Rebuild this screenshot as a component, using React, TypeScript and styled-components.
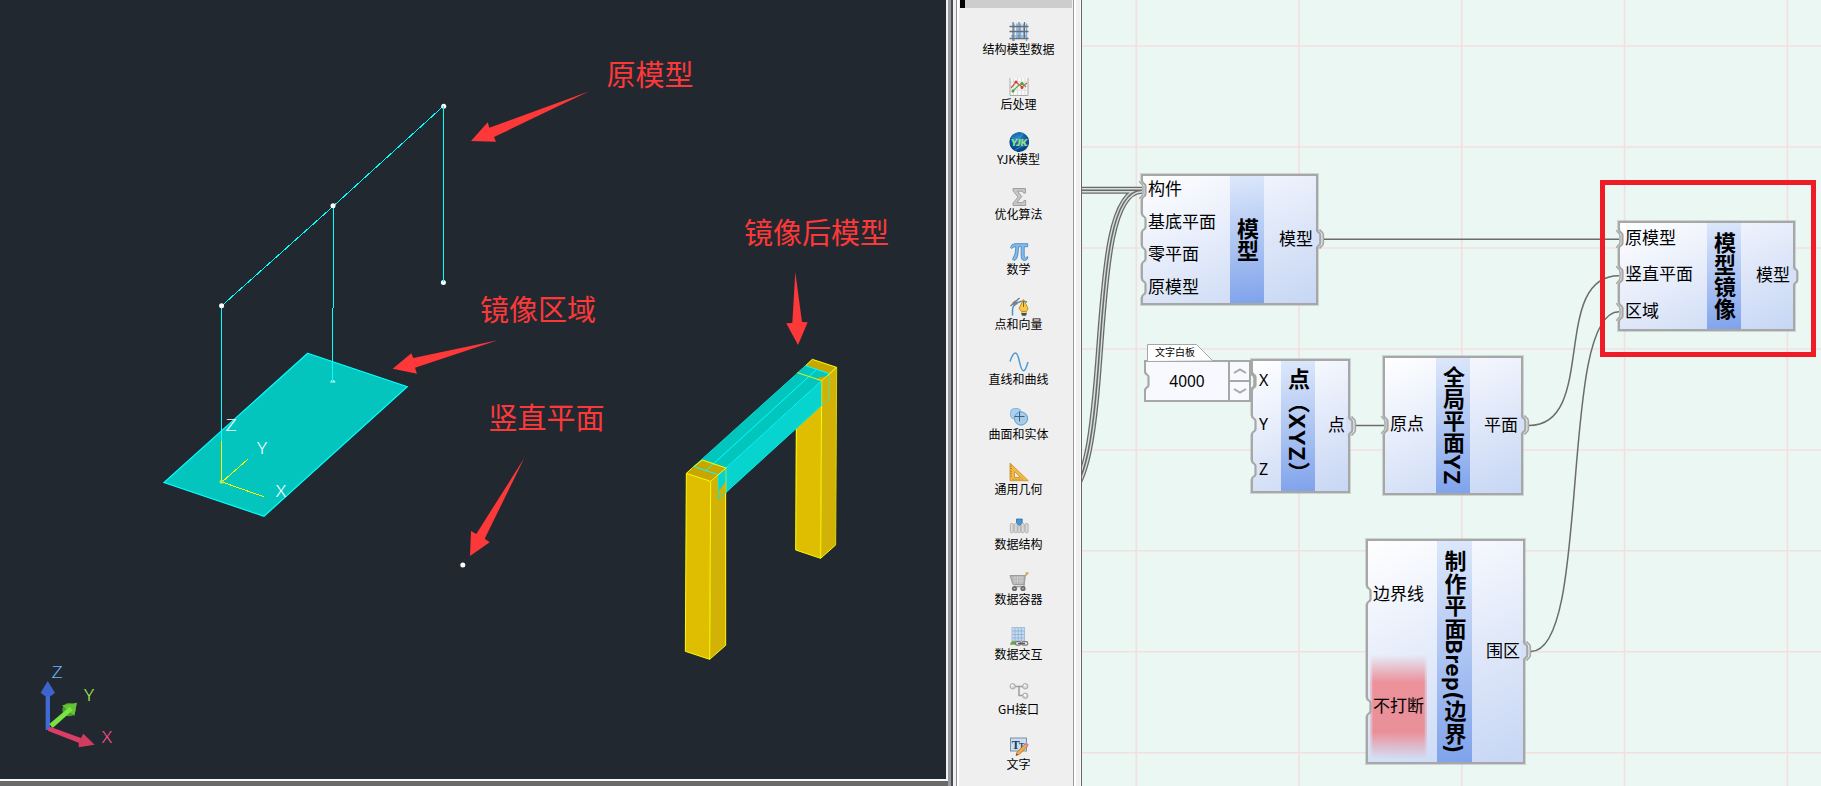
import React from "react";
import styled, { createGlobalStyle, css } from "styled-components";

const FONT = `"Noto Sans CJK SC", "Noto Sans", sans-serif`;
const EDGE = "#a7a7a7";
const CANVAS = "#ebf7f3";

const GlobalStyle = createGlobalStyle`
  html, body, #root { height: 100%; }
  body { margin: 0; overflow: hidden; font-family: ${FONT}; color: #000; }
  svg { display: block; }
`;

const Screen = styled.div`
  display: flex;
  width: 1821px;
  height: 786px;
  overflow: hidden;
  background: #efefef;
`;

/* ---------- CAD viewport ---------- */

const ViewportFrame = styled.section`
  display: flex;
  flex-direction: column;
  width: 948px;
  flex: none;
  background: #6a6a6a;
`;

const Viewport = styled.div`
  position: relative;
  height: 779px;
  box-sizing: border-box;
  background: #222830;
  border-right: 2px solid #f1f1f1;
  overflow: hidden;
`;

const ViewportRule = styled.div`
  height: 2px;
  background: #f8f8f8;
`;

const Callout = styled.span<{ $x: number; $y: number }>`
  position: absolute;
  left: ${(p) => p.$x}px;
  top: ${(p) => p.$y}px;
  transform: translateY(-50%);
  font-size: 29px;
  line-height: 32px;
  color: #fd3838;
  white-space: nowrap;
`;

const AxisLetter = styled.span<{ $x: number; $y: number; $color: string }>`
  position: absolute;
  left: ${(p) => p.$x}px;
  top: ${(p) => p.$y}px;
  width: 20px;
  margin-left: -10px;
  text-align: center;
  transform: translateY(-50%) scaleX(1.25);
  font-family: "Noto Sans CJK SC", sans-serif;
  font-weight: 300;
  font-size: 16px;
  line-height: 20px;
  color: ${(p) => p.$color};
`;

const ModelDrawing = () => (
  <svg width="946" height="779" viewBox="0 0 946 779" fill="none">
    <polygon points="307.7,353.3 407.3,386.7 264,516.3 164,482.5" fill="#04c5be" stroke="#00ffff" strokeWidth="1.2" />
    <g stroke="#00ffff" strokeWidth="1" shapeRendering="crispEdges">
      <path d="M443.5 106L333.5 206L221.5 306" />
      <path d="M443.5 106V283M333.5 206V308M332.5 308V382M221.5 306V441" />
    </g>
    <g stroke="#ffff00" strokeWidth="1" shapeRendering="crispEdges">
      <path d="M221.5 441V482M222 482L247.7 459.3M222 482L263.7 496.7" />
    </g>
    <g fill="#ffffff">
      <circle cx="443.7" cy="106.3" r="2.5" />
      <circle cx="333" cy="205.8" r="2.5" />
      <circle cx="221.6" cy="305.7" r="2.5" />
      <circle cx="443.4" cy="282.4" r="2.5" />
      <circle cx="462.8" cy="565" r="2.5" />
      <path d="M330.3 382.5a2.5 2.5 0 0 1 5 0z" fill="#c9f5f2" />
      <circle cx="221.5" cy="481.7" r="2" fill="#b9ec52" />
    </g>
    <path d="M332.5 376V382M443.5 278V282M443.5 106V111" stroke="#00ffff" shapeRendering="crispEdges" />

    <g transform="translate(660 200) scale(.33333)" strokeWidth="3" strokeLinejoin="round">
      <polygon points="412,518 457,478 530,502 485,542" fill="#c8a600" />
      <polygon points="408,640 485,542 482,1075 407,1050" fill="#dfbd00" />
      <polygon points="485,542 530,502 527,1035 482,1075" fill="#d2b207" />
      <path d="M437 497L457 478L530 502L485 542L482 1075L407 1050L409 685M482 1075L527 1035" stroke="#ffff00" />
      <path d="M530 502L527 1035" stroke="#d9d900" />

      <polygon points="101,800 437,497 508,521 485,542 198,804" fill="#02c5be" />
      <polygon points="198,804 485,542 485,616 198,878" fill="#08d4cf" />
      <polygon points="468,540 482,530 500,530 485,542" fill="#c8a600" />

      <polygon points="79,820 127,780 198,804 152,844" fill="#c8a600" />
      <polygon points="79,820 152,844 149,1378 76,1354" fill="#dfbd00" />
      <polygon points="152,844 198,804 197,1336 149,1378" fill="#d2b207" />
      <polygon points="175,824 198,804 198,843 178,872" fill="#08d4cf" />

      <path d="M101 800L437 497" stroke="#00ddd8" />
      <path d="M437 497L508 521M139 811L468 510M198 804L485 542M101 800L175 824" stroke="#00ffff" />
      <path d="M175 824V896L198 877L485 616" stroke="#00e8e0" />
      <path d="M508 521V598L485 616" stroke="#5adc91" />
      <path d="M198 804V878M485 542V616" stroke="#a8e14c" />
      <path d="M412 518L485 542L530 502" stroke="#e4f512" />
      <path d="M101 800L127 780L198 804L152 844L149 1378L76 1354L79 820L101 800M79 820L152 844M149 1378L197 1336V878" stroke="#ffff00" />
    </g>

    <g fill="#fd3838">
      <polygon points="589.3,91.3 489.3,127.8 487.7,122.3 471,140.9 496,141.7 494,137.1" />
      <polygon points="497.7,340.3 413.3,358 411.3,353.3 392.7,368.7 417,373.7 415,367.7" />
      <polygon points="524.3,458.1 476.3,533.9 471,531.1 470,555.9 489.7,542.2 484.7,538.7" />
      <polygon points="795.3,272 792.3,323 786.3,323.3 798,345 807.7,322.3 802,322" />
    </g>

    <g transform="translate(0 640) scale(.33333)">
      <polygon points="137,160 150,160 150,262 142,270 137,270" fill="#3f6bd6" />
      <path d="M143 123L165 158Q144 180 122 158Z" fill="#3f63cc" />
      <circle cx="207" cy="209" r="20" fill="#4b9c2d" />
      <polygon points="186,196 231,188 223,228" fill="#62c433" />
      <polygon points="148,252 209,200 219,210 158,264" fill="#79e342" />
      <polygon points="142,266 152,261 243,294 238,309 145,273" fill="#d93e66" />
      <polygon points="250,281 284,314 236,322 236,306" fill="#cf3c60" />
    </g>
  </svg>
);

/* ---------- Splitters ---------- */

const Splitter = styled.div`
  width: 11px;
  flex: none;
  background: linear-gradient(
    to right,
    #9a9aa3 0 3px, #4c4c50 3px 5px, #f0f0f0 5px 8px, #8f8f8f 8px 9px, #ffffff 9px 11px
  );
`;

const RightSplitter = styled.div`
  width: 9px;
  flex: none;
  background: linear-gradient(
    to right,
    #9b9b9b 0 1px, #ffffff 1px 3px, #f0f0f0 3px 7px, #fafafa 7px 8px, #666666 8px 9px
  );
`;

/* ---------- Tool palette ---------- */

const Palette = styled.aside`
  display: flex;
  flex-direction: column;
  width: 114px;
  flex: none;
  background: #efefef;
`;

const PaletteBar = styled.div`
  height: 8px;
  flex: none;
  margin: 0 1px 0 1px;
  background: #cdcdcd;
  border-left: 5px solid #000;
  box-sizing: border-box;
`;

const PaletteItems = styled.div`
  display: flex;
  flex-direction: column;
  padding: 14px 0 0 5px;
`;

const PaletteItem = styled.div`
  display: flex;
  flex-direction: column;
  align-items: center;
  height: 55px;
  flex: none;
`;

const PaletteLabel = styled.span`
  margin-top: -1px;
  font-size: 12px;
  line-height: 16px;
  white-space: nowrap;
`;

const icons: Record<string, React.ReactNode> = {
  grid: (
    <g fill="none">
      <path d="M5 1.500V19M8 1.500V17M11.500 1.500V17M14.500 1.500V17M17.500 1.500V19M2 14H18" stroke="#7eb0df" strokeWidth="1.500" />
      <path d="M.5 4.500H19.500M.5 9.500H19.500M.5 16.500H19.500" stroke="#6d6d6d" strokeWidth="1.300" />
      <path d="M4 0V19M10 0V17M15.500 0V17" stroke="#5d6f84" strokeWidth="1.100" />
    </g>
  ),
  chart: (
    <g fill="none">
      <rect x="1" y="1" width="18" height="18" fill="#f8f8f8" />
      <path d="M4.500 1V18M8.500 1V18M12.500 1V18M16 1V18M1 5H18M1 9H18M1 13H18" stroke="#dddddd" />
      <path d="M1 1V18.500H19V1" stroke="#aaaaaa" />
      <path d="M2 11L7 5L13 10L18 6" stroke="#d85048" strokeWidth="1.200" />
      <path d="M3 15L9 9L13 6L17 10" stroke="#5aa64e" strokeWidth="1.200" />
      <circle cx="7" cy="5" r="1.500" fill="#d83a32" /><circle cx="13" cy="10.500" r="1.500" fill="#d83a32" />
      <circle cx="4" cy="14" r="1.500" fill="#4aa23c" /><circle cx="13" cy="6.500" r="1.500" fill="#4aa23c" />
    </g>
  ),
  yjk: (
    <g>
      <defs>
        <radialGradient id="globe" cx=".45" cy=".3" r=".75">
          <stop offset="0" stopColor="#318bc8" /><stop offset=".6" stopColor="#07549c" /><stop offset="1" stopColor="#043a78" />
        </radialGradient>
      </defs>
      <circle cx="10.200" cy="10" r="9.900" fill="url(#globe)" />
      <path d="M3 5Q10 10 14 1M6 18Q12 13 19 13" stroke="#4aa0d4" strokeWidth=".8" fill="none" />
      <text x="10.100" y="13.500" fontFamily="Lato, sans-serif" fontWeight="900" fontStyle="italic" fontSize="10" fill="#8be06a" stroke="#d9f5c0" strokeWidth=".2" textAnchor="middle">YJK</text>
    </g>
  ),
  sigma: (
    <path d="M4 1.500H16.500V6H14.500L13.500 4.200H8.500L12.800 9.600L8 15.600H13.700L15 13.500H16.700V18.500H4V16.200L9 10L4 3.800Z" fill="#c6c6c6" stroke="#999999" strokeWidth=".9" />
  ),
  pi: (
    <path d="M1.500 5.500Q2.500 1.700 6 1.700H18.700V4.700H15.200V13.500Q15.200 16 16.600 16Q17.600 16 18 14.600L19 15Q18.500 18.500 15.500 18.500Q12.200 18.500 12.200 14.500V4.700H9.500Q9.400 13 7.700 16.500Q6.500 18.700 4.600 18.300Q2.500 17.500 4.500 15.300Q6.800 12 6.900 4.700Q4 4.700 2.500 6.500Z" fill="#84bbea" stroke="#4a88c3" strokeWidth=".9" />
  ),
  pen: (
    <g fill="none">
      <path d="M3.500 18.500V13Q3.700 7 10 5Q14 3.500 18 5" stroke="#4a94cd" strokeWidth="1.500" />
      <path d="M1.500 9L10.500 1" stroke="#777777" strokeWidth="1.300" />
      <rect x="3.800" y="4" width="4.200" height="4.200" fill="#808080" transform="rotate(-40 6 6)" />
      <path d="M14.500 2.500L19 11.500L17.500 14.500H12.500L10 11.500Z" fill="#f8c944" stroke="#bd8425" strokeWidth=".9" />
      <path d="M14.500 4V10" stroke="#8c631b" />
      <path d="M12 15.500H18L17 18.700H13Z" fill="#4c4c4c" />
      <path d="M12.500 15.500H17.500" stroke="#f4d872" />
    </g>
  ),
  wave: (
    <path d="M1 9.500C3.500 2 5 1 6.500 1C10.500 1 10.500 18.700 14.500 18.700C16.300 18.700 17.500 15.500 19 10" fill="none" stroke="#4d9bd0" strokeWidth="1.500" />
  ),
  solid: (
    <g>
      <rect x="1.500" y="1.500" width="10.500" height="10.500" rx="4" fill="#a9d0f1" stroke="#86b4de" />
      <circle cx="12" cy="11.500" r="6.600" fill="#a5cbed" stroke="#5d9bd0" />
      <path d="M10.500 4.500V14.500M5.500 9.500H15.500" stroke="#4f5d6d" />
    </g>
  ),
  ruler: (
    <g>
      <path d="M1 1L19.300 18.700H1Z" fill="#f2b84a" stroke="#c98b25" strokeWidth=".8" />
      <path d="M5.500 9.500L11.500 15.300H5.500Z" fill="#efefef" stroke="#c98b25" strokeWidth=".8" />
      <path d="M1 4H3M1 6.500H3M1 9H3M1 11.500H3M1 14H3M4 18V16.500M7 18V16.500M10 18V16.500M13 18V16.500" stroke="#b57a1b" strokeWidth=".8" />
    </g>
  ),
  list: (
    <g fill="#d8d8d8" stroke="#a9a9a9" strokeWidth=".8">
      <rect x="1.300" y="6.500" width="3" height="9.200" rx="1" />
      <rect x="5.300" y="6.500" width="3" height="9.200" rx="1" />
      <rect x="9" y="6.500" width="2.600" height="9.200" rx="1" />
      <rect x="12.300" y="6.500" width="3" height="9.200" rx="1" />
      <rect x="16.200" y="6.500" width="3" height="9.200" rx="1" />
      <path d="M7.500 2H13.200V5.500L10.300 8.500L7.500 5.500Z" fill="#4597dc" stroke="#2e6ba8" />
    </g>
  ),
  cart: (
    <g fill="none">
      <path d="M1 3.500H16L15 12.500H4Z" fill="#b4b4b4" stroke="#9d9d9d" />
      <path d="M3 6H15M4.500 9H15M6 4V12M8.500 4V12M11 4V12M13 4V12" stroke="#d6d6d6" strokeWidth=".6" />
      <path d="M18 2L16 4L15 14.500H5" stroke="#a0a0a0" strokeWidth="1.300" />
      <circle cx="5.500" cy="16.500" r="2.600" fill="#6c6c6c" /><circle cx="14" cy="16.500" r="2.600" fill="#6c6c6c" />
      <circle cx="5.500" cy="16.500" r=".8" fill="#c5c5c5" /><circle cx="14" cy="16.500" r=".8" fill="#c5c5c5" />
      <rect x="16.500" y=".3" width="3" height="2" fill="#e9a43a" />
    </g>
  ),
  exchange: (
    <g fill="none">
      <rect x="3" y=".5" width="12.500" height="13.500" fill="#c6dcf2" stroke="#9fb6cf" strokeWidth=".8" />
      <path d="M6 1V14M9.200 1V14M12.400 1V14M3 4H15.500M3 7.500H15.500M3 11H15.500" stroke="#8eafd4" strokeWidth=".8" />
      <path d="M1 17.800Q2 12.500 7 14.500V17.800Z" fill="#6da343" />
      <rect x="6.500" y="14.700" width="5.500" height="3.500" rx="1.700" stroke="#777777" strokeWidth="1.200" />
      <rect x="12.800" y="14.700" width="6" height="3.500" rx="1.700" stroke="#777777" strokeWidth="1.200" />
      <path d="M9 16.500H16" stroke="#555555" strokeWidth="1.200" />
    </g>
  ),
  tree: (
    <g fill="none">
      <path d="M4 4.500H16M10 4.500V13.500H15" stroke="#9d9d9d" strokeWidth="1.500" />
      <g fill="#d6d6d6" stroke="#a3a3a3" strokeWidth=".9">
        <circle cx="3.700" cy="4.300" r="2.700" /><circle cx="16.300" cy="4.300" r="2.700" /><circle cx="16.300" cy="13.800" r="2.700" />
      </g>
      <circle cx="3.200" cy="3.500" r="1.100" fill="#fff" /><circle cx="15.800" cy="3.500" r="1.100" fill="#fff" /><circle cx="15.800" cy="13" r="1.100" fill="#fff" />
    </g>
  ),
  text: (
    <g>
      <rect x="1.500" y="1" width="16" height="13" fill="#c9dff3" stroke="#7f90a2" />
      <text x="2.800" y="11.800" fontFamily="Liberation Serif, serif" fontWeight="700" fontSize="12" fill="#223c63">T</text>
      <text x="10" y="11.800" fontFamily="Liberation Serif, serif" fontWeight="700" fontSize="8" fill="#223c63">T</text>
      <path d="M7 18.500L8 15.300L16.500 6.500L19 8.800L10.300 17.500Z" fill="#f3a94a" stroke="#b06a1d" strokeWidth=".7" />
      <path d="M15.700 7.300L17.600 5.400L19.800 7.800L18 9.700Z" fill="#cf82c3" />
      <path d="M7 18.500L7.600 16.500L9 17.800Z" fill="#444444" />
    </g>
  ),
};

const tools: [string, string][] = [
  ["grid", "结构模型数据"],
  ["chart", "后处理"],
  ["yjk", "YJK模型"],
  ["sigma", "优化算法"],
  ["pi", "数学"],
  ["pen", "点和向量"],
  ["wave", "直线和曲线"],
  ["solid", "曲面和实体"],
  ["ruler", "通用几何"],
  ["list", "数据结构"],
  ["cart", "数据容器"],
  ["exchange", "数据交互"],
  ["tree", "GH接口"],
  ["text", "文字"],
];

/* ---------- Node canvas ---------- */

const Canvas = styled.main`
  position: relative;
  flex: 1;
  background: ${CANVAS};
  overflow: hidden;
`;

const ORIGIN = 1082;

const CanvasLayer = styled.svg`
  position: absolute;
  inset: 0;
`;

const NodeBox = styled.div<{ $x: number; $y: number; $w: number; $h: number; $cols: string }>`
  position: absolute;
  left: ${(p) => p.$x - ORIGIN}px;
  top: ${(p) => p.$y}px;
  width: ${(p) => p.$w}px;
  height: ${(p) => p.$h}px;
  box-sizing: border-box;
  border: 2px solid ${EDGE};
  box-shadow: 0 0 0 1px rgba(150, 150, 150, 0.35);
  display: grid;
  grid-template-columns: ${(p) => p.$cols};
  background: linear-gradient(155deg, #ffffff 0%, #e4ebfa 48%, #c6d6f4 100%);
`;

const PortColumn = styled.div`
  display: flex;
  flex-direction: column;
  min-width: 0;
  margin: -2px 0 -1px;
`;

const PortRow = styled.div<{ $side: "in" | "out" }>`
  position: relative;
  flex: 1;
  display: flex;
  align-items: center;
  justify-content: ${(p) => (p.$side === "in" ? "flex-start" : "flex-end")};
  padding: ${(p) => (p.$side === "in" ? "0 0 4px 5px" : "0 3px 3px 0")};
`;

const PortLabel = styled.span<{ $latin?: boolean }>`
  position: relative;
  font-size: ${(p) => (p.$latin ? 16 : 17)}px;
  line-height: 20px;
  white-space: nowrap;
  ${(p) => p.$latin && css`
    top: 1px;
    left: 1px;
    font-family: "Noto Sans", sans-serif;
  `}
`;

const AlertGlow = styled.div`
  position: absolute;
  left: 2px;
  width: 57px;
  top: 4px;
  bottom: 4px;
  background: linear-gradient(to bottom, rgba(235, 137, 147, 0), #eb929b 26%, #e98f98 74%, rgba(235, 137, 147, 0));
  mask-image: linear-gradient(
    to right,
    rgba(0, 0, 0, 0.4) 0 1px, #000 3px calc(100% - 3px), rgba(0, 0, 0, 0.4) calc(100% - 1px)
  );
`;

const TitleBand = styled.div`
  display: flex;
  align-items: center;
  justify-content: center;
  padding-right: 3px;
  background: linear-gradient(172deg, #dde8fb 0%, #b4caf4 45%, #7fa2eb 100%);
`;

const Title = styled.span<{ $spacing?: number }>`
  writing-mode: vertical-rl;
  font-family: Inter, "Noto Sans CJK SC", sans-serif;
  font-size: 22px;
  line-height: 31px;
  font-weight: 700;
  letter-spacing: ${(p) => p.$spacing ?? 0}px;
  white-space: nowrap;
`;

const PortMark = styled.svg<{ $side: "in" | "out" }>`
  position: absolute;
  top: 50%;
  margin-top: -12px;
  ${(p) => (p.$side === "in" ? "left: -8px;" : "right: -10px;")}
`;

const InPort = ({ linked }: { linked?: boolean }) => (
  <PortMark $side="in" width="14" height="24" viewBox="0 0 14 24" fill="none">
    <path d="M5 2.500H8V3L10.500 6V18L8 21V21.500H5Z" fill={CANVAS} />
    <path d="M7 1.500V3Q7.300 4.600 9 5.600Q10.500 6.400 10.500 8V16Q10.500 17.600 9 18.400Q7.300 19.400 7 21V22.500" stroke={EDGE} strokeWidth="2.200" />
    {linked && <path d="M4.500 3Q5 4.800 6.500 6Q8 7.200 8 9V15Q8 16.800 6.500 18Q5 19.200 4.500 21" stroke={EDGE} strokeWidth="1.500" />}
  </PortMark>
);

const OutPort = ({ linked }: { linked?: boolean }) => (
  <PortMark $side="out" width="14" height="24" viewBox="0 0 14 24" fill="none">
    <path d="M2 2.500H5L8.500 6V18L5 21.500H2Z" fill="#d6e1f7" />
    <path d="M5 1.500V3Q5.300 4.600 7 5.600Q8.300 6.400 8.300 8V16Q8.300 17.600 7 18.400Q5.300 19.400 5 21V22.500" stroke={EDGE} strokeWidth="2.200" />
    {linked && <path d="M7.500 2.500Q8.300 3.700 9.500 4.600Q11.300 6 11.300 8V16Q11.300 18 9.500 19.400Q8.300 20.300 7.500 21.500" stroke={EDGE} strokeWidth="1.700" />}
  </PortMark>
);

type Port = { label: string; linked?: boolean; latin?: boolean; alert?: boolean };
type NodeProps = {
  x: number; y: number; w: number; h: number; cols: string;
  title: string; spacing?: number; inputs: Port[]; output: Port;
};

const GraphNode = ({ x, y, w, h, cols, title, spacing, inputs, output }: NodeProps) => (
  <NodeBox $x={x} $y={y} $w={w} $h={h} $cols={cols}>
    <PortColumn>
      {inputs.map((p) => (
        <PortRow key={p.label} $side="in">
          {p.alert && <AlertGlow />}
          <InPort linked={p.linked} />
          <PortLabel $latin={p.latin}>{p.label}</PortLabel>
        </PortRow>
      ))}
    </PortColumn>
    <TitleBand><Title $spacing={spacing}>{title}</Title></TitleBand>
    <PortColumn>
      <PortRow $side="out">
        <OutPort linked={output.linked} />
        <PortLabel>{output.label}</PortLabel>
      </PortRow>
    </PortColumn>
  </NodeBox>
);

const nodes: NodeProps[] = [
  {
    x: 1141, y: 174, w: 177, h: 131, cols: "87px 34px 1fr", title: "模型",
    inputs: [{ label: "构件", linked: true }, { label: "基底平面" }, { label: "零平面" }, { label: "原模型" }],
    output: { label: "模型", linked: true },
  },
  {
    x: 1618, y: 221, w: 177, h: 110, cols: "87px 34px 1fr", title: "模型镜像",
    inputs: [{ label: "原模型", linked: true }, { label: "竖直平面", linked: true }, { label: "区域", linked: true }],
    output: { label: "模型" },
  },
  {
    x: 1251, y: 359, w: 99, h: 134, cols: "28px 34px 1fr", title: "点（XYZ）", spacing: 0.5,
    inputs: [{ label: "X", latin: true }, { label: "Y", latin: true }, { label: "Z", latin: true }],
    output: { label: "点", linked: true },
  },
  {
    x: 1383, y: 356, w: 140, h: 139, cols: "51px 34px 1fr", title: "全局平面YZ",
    inputs: [{ label: "原点", linked: true }],
    output: { label: "平面", linked: true },
  },
  {
    x: 1366, y: 539, w: 159, h: 225, cols: "69px 35px 1fr", title: "制作平面Brep(边界)", spacing: 0.4,
    inputs: [{ label: "边界线" }, { label: "不打断", alert: true }],
    output: { label: "围区", linked: true },
  },
];

const NumberPanel = styled.div`
  position: absolute;
  left: ${1144 - ORIGIN}px;
  top: 344px;
  width: 107px;
  display: flex;
  flex-direction: column;
`;

const NumberTab = styled.div`
  position: relative;
  height: 16px;
  margin-left: 3px;
  padding-left: 8px;
  font-size: 10px;
  line-height: 15px;
`;

const TabShape = styled.svg`
  position: absolute;
  left: 0;
  top: 0;
`;

const TabText = styled.span`
  position: relative;
`;

const NumberBody = styled.div`
  display: flex;
  height: 42px;
  box-sizing: border-box;
  border: 2px solid ${EDGE};
  background: #f8f9fe;
`;

const NumberValue = styled.div`
  position: relative;
  flex: 1;
  display: flex;
  align-items: center;
  justify-content: center;
  padding: 0 0 1px 0;
  font: 15.500px/20px "Noto Sans", sans-serif;
`;

const Stepper = styled.div`
  display: flex;
  flex-direction: column;
  width: 19px;
  border-left: 2px solid ${EDGE};
`;

const Step = styled.div`
  display: flex;
  flex: 1;
  align-items: center;
  justify-content: center;
  & + & { border-top: 2px solid ${EDGE}; }
`;

const Chevron = ({ down }: { down?: boolean }) => (
  <svg width="14" height="6" viewBox="0 0 14 6" fill="none">
    <path d={down ? "M1 1L7 4.500L13 1" : "M1 5L7 1.500L13 5"} stroke={EDGE} strokeWidth="2" />
  </svg>
);

const HighlightBox = styled.div`
  position: absolute;
  left: ${1600 - ORIGIN}px;
  top: 180px;
  width: 216px;
  height: 177px;
  box-sizing: border-box;
  border: 5px solid #ee1c24;
`;

const gridX = [1136.3, 1299, 1461.8, 1624.6, 1787.4];
const gridY = [46, 147, 248, 349, 450, 550.8, 651.8, 752.8];

export default function App() {
  return (
    <>
      <GlobalStyle />
      <Screen>
        <ViewportFrame>
          <Viewport>
            <ModelDrawing />
            <Callout $x={606.5} $y={73}>原模型</Callout>
            <Callout $x={744} $y={231}>镜像后模型</Callout>
            <Callout $x={480} $y={308}>镜像区域</Callout>
            <Callout $x={488.5} $y={416}>竖直平面</Callout>
            <AxisLetter $x={230.5} $y={424} $color="#fff">Z</AxisLetter>
            <AxisLetter $x={262} $y={447} $color="#fff">Y</AxisLetter>
            <AxisLetter $x={280.5} $y={489.5} $color="#fff">X</AxisLetter>
            <AxisLetter $x={57} $y={670.5} $color="#6fb2ff">Z</AxisLetter>
            <AxisLetter $x={88.5} $y={693.5} $color="#a5f04f">Y</AxisLetter>
            <AxisLetter $x={106.5} $y={736} $color="#ff4f90">X</AxisLetter>
          </Viewport>
          <ViewportRule />
        </ViewportFrame>
        <Splitter />
        <Palette>
          <PaletteBar />
          <PaletteItems>
            {tools.map(([icon, label]) => (
              <PaletteItem key={icon}>
                <svg width="20" height="20" viewBox="0 0 20 20">{icons[icon]}</svg>
                <PaletteLabel>{label}</PaletteLabel>
              </PaletteItem>
            ))}
          </PaletteItems>
        </Palette>
        <RightSplitter />
        <Canvas>
          <CanvasLayer width="739" height="786" viewBox="1082 0 739 786" fill="none">
            <g stroke="#f3dfe0" strokeWidth="1.600">
              {gridX.map((x) => <path key={x} d={`M${x} 0V786`} />)}
              {gridY.map((y) => <path key={y} d={`M1082 ${y}H1821`} />)}
            </g>
          </CanvasLayer>
          {nodes.map((n) => <GraphNode key={n.title} {...n} />)}
          <NumberPanel>
            <NumberTab>
              <TabShape width="68" height="17" viewBox="0 0 68 17">
                <path d="M.5 17V.5H49.500L65.500 16.500" fill="#fff" stroke={EDGE} />
              </TabShape>
              <TabText>文字白板</TabText>
            </NumberTab>
            <NumberBody>
              <NumberValue><InPort />4000</NumberValue>
              <Stepper>
                <Step><Chevron /></Step>
                <Step><Chevron down /></Step>
              </Stepper>
            </NumberBody>
          </NumberPanel>
          <CanvasLayer width="739" height="786" viewBox="1082 0 739 786" fill="none">
            <g>
              <path d="M1251 371.500V374Q1254.500 375 1254.500 378V384Q1254.500 388 1251 389V391" stroke={EDGE} strokeWidth="2.500" />
              <path d="M1082 190.300H1142M1142 190.300C1080 190.300 1120 500 1057 500" stroke="#6a6a6a" strokeWidth="7" />
              <path d="M1082 190.300H1142M1142 190.300C1080 190.300 1120 500 1057 500" stroke="#d5dfdc" strokeWidth="4.400" />
              <path d="M1082 190.300H1142M1142 190.300C1080 190.300 1120 500 1057 500" stroke="#6a6a6a" strokeWidth="1.600" />
            </g>
            <g stroke="#6c6c6c" strokeWidth="1.500">
              <path d="M1324 239.200H1619" />
              <path d="M1356 425.500H1384" />
              <path d="M1529 425.500C1598 425.500 1550 275.700 1619 275.700" />
              <path d="M1531 651.500C1592 651.500 1558 311.700 1619 311.700" />
            </g>
          </CanvasLayer>
          <HighlightBox />
        </Canvas>
      </Screen>
    </>
  );
}
